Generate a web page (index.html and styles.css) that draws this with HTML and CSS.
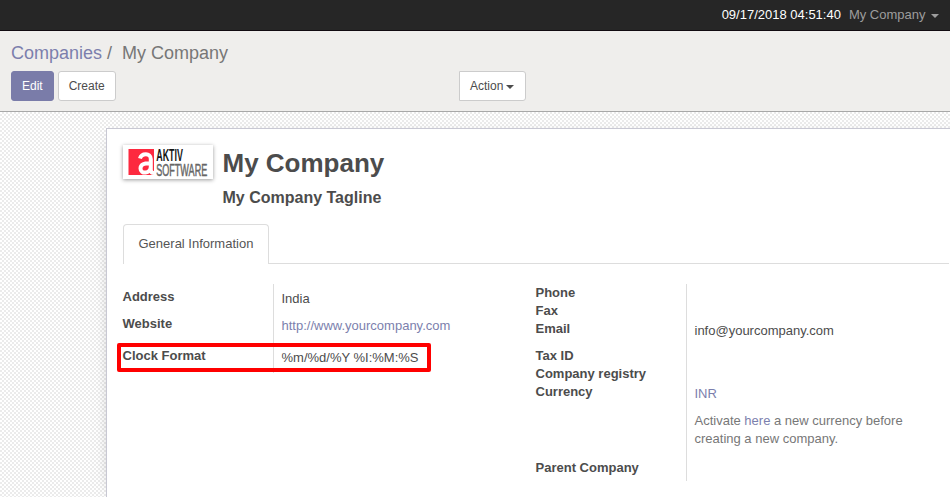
FILE: index.html
```html
<!DOCTYPE html>
<html lang="en">
<head>
<meta charset="utf-8">
<title>My Company</title>
<link rel="stylesheet" href="styles.css">
</head>
<body>
<nav class="navbar"><span class="clock">09/17/2018 04:51:40</span><span class="company-menu">My Company</span><i class="caret"></i></nav>
<header class="control-panel">
  <div class="breadcrumb"><a>Companies</a><span class="sep">/</span><span>My Company</span></div>
  <div class="buttons">
    <button class="btn primary">Edit</button>
    <button class="btn">Create</button>
    <button class="btn action">Action<i class="caret"></i></button>
  </div>
</header>
<main class="content">
  <section class="sheet">
    <div class="heading">
      <svg class="logo" viewBox="0 0 90 34" role="img" aria-label="Aktiv Software">
        <rect x="5.500" y="4" width="25.500" height="26" fill="#fd293f"/>
        <path d="M17 13.500C18.500 7.800 27.800 7.500 27.800 14V25Q27.800 28 31 28M27.500 18.300C21 18 17.500 19.500 17.500 23.500C17.500 29.500 27.800 29 27.800 21.500" fill="none" stroke="#fff" stroke-width="4"/>
        <text class="logo-top" transform="translate(33.200 16) scale(.54 1)">AKTIV</text>
        <text class="logo-bottom" transform="translate(33.200 30.500) scale(.55 1)">SOFTWARE</text>
      </svg>
      <div>
        <h1>My Company</h1>
        <h2>My Company Tagline</h2>
      </div>
    </div>
    <div class="tabs"><div class="tab">General Information</div></div>
    <div class="groups">
      <div class="group left">
        <div class="row"><b>Address</b><span>India</span></div>
        <div class="row website"><b>Website</b><span><a>http://www.yourcompany.com</a></span></div>
        <div class="row format"><b>Clock Format</b><span>%m/%d/%Y %I:%M:%S</span><i class="highlight"></i></div>
      </div>
      <div class="group right">
        <div class="row"><b>Phone</b><span></span></div>
        <div class="row"><b>Fax</b><span></span></div>
        <div class="row email"><b>Email</b><span>info@yourcompany.com</span></div>
        <div class="row"><b>Tax ID</b><span></span></div>
        <div class="row"><b>Company registry</b><span></span></div>
        <div class="row currency"><b>Currency</b><span><a>INR</a><span class="hint">Activate <a>here</a> a new currency before<br>creating a new company.</span></span></div>
        <div class="row parent"><b>Parent Company</b><span></span></div>
      </div>
    </div>
  </section>
</main>
</body>
</html>
```
FILE: styles.css
```css
* { box-sizing: border-box; }
body {
  margin: 0;
  height: 497px;
  overflow: hidden;
  display: flex;
  flex-direction: column;
  font: 13px/18px "Liberation Sans", Arial, sans-serif;
  color: #4c4c4c;
}
a { color: #7c7fad; }
.navbar {
  height: 31px;
  flex: none;
  display: flex;
  align-items: center;
  justify-content: flex-end;
  padding: 0 11px 1px 0;
  background: #262626;
  border-bottom: 1px solid #110b11;
  color: #fff;
}
.company-menu { margin-left: 8px; color: #9d9d9d; }
.caret {
  display: inline-block;
  border: 4px solid transparent;
  border-top-color: currentColor;
  border-bottom: 0;
}
.navbar .caret { margin: 3px 0 0 5.500px; color: #9d9d9d; }
.control-panel {
  height: 81px;
  flex: none;
  padding: 10px 11px 0;
  background: #efeeec;
  border-bottom: 1px solid #a8a8a8;
}
.breadcrumb { font-size: 18px; line-height: 25px; color: #777; }
.sep { margin: 0 10px 0 5px; }
.buttons { display: flex; margin-top: 5px; }
.btn {
  height: 30px;
  padding: 0 10px;
  margin: 0 4px 0 0;
  border: 1px solid #ccc;
  border-radius: 3px;
  background: #fff;
  color: #4c4c4c;
  font: 12px/18px "Liberation Sans", Arial, sans-serif;
}
.primary { background: #7a7ca9; border-color: #7a7ca9; color: #fff; }
.action { margin-left: 339px; width: 67px; white-space: nowrap; border-radius: 0 3px 3px 0; }
.action .caret { margin-left: 3px; vertical-align: 1px; }
.content {
  flex: 1;
  min-height: 0;
  overflow: hidden;
  display: flex;
  padding: 16px 0 0 106px;
  background: repeating-conic-gradient(#ebebeb 0 25%, #fff 0 50%) 0 0 / 4px 4px;
}
.sheet {
  flex: none;
  width: 860px;
  padding: 16px 16px 0 15px;
  background: #fff;
  border: 1px solid #c8c8d3;
  border-bottom: 0;
  box-shadow: 0 5px 20px -15px #000;
}
.heading { display: flex; height: 79px; }
.logo {
  width: 90px;
  height: 34px;
  margin: 0 9.500px 0 1px;
  box-shadow: 0 1px 4px rgba(0, 0, 0, .4);
}
.logo text { font-family: "Liberation Sans", Arial, sans-serif; }
.logo-top { font-size: 16.500px; font-weight: bold; fill: #151515; }
.logo-bottom { font-size: 16.500px; fill: #666; stroke: #666; stroke-width: .5px; }
h1 { margin: 3px 0 0; font-size: 26px; line-height: 30px; }
h2 { margin: 11px 0 0; font-size: 16px; line-height: 18px; }
.tabs { display: flex; height: 40px; margin-left: 1px; border-bottom: 1px solid #ddd; }
.tab {
  width: 146px;
  height: 40px;
  padding: 10px 0 0 14.500px;
  border: 1px solid #ddd;
  border-bottom: 0;
  border-radius: 4px 4px 0 0;
  background: #fff;
  color: #555;
}
.groups { display: flex; align-items: flex-start; margin-top: 20px; }
.group { width: 413px; }
.row { display: grid; grid-template-columns: 151px 1fr; min-height: 18px; }
.row > b { padding-left: .5px; }
.row > span { border-left: 1px solid #ddd; padding: 2px 0 0 7.500px; }
.left .row { min-height: 27px; }
.left .row > b { padding-top: 4px; }
.left .row > span { padding-top: 6px; }
.left .website { min-height: 32px; }
.left .format { min-height: 30px; position: relative; }
.highlight {
  position: absolute;
  left: -5px;
  top: 0;
  width: 314px;
  height: 29px;
  border: 4px solid #f00;
  border-radius: 2px;
}
.email { height: 27px; }
.currency { height: 76px; }
.parent { height: 22px; }
.hint { display: block; margin-top: 9px; color: #777; }
```
